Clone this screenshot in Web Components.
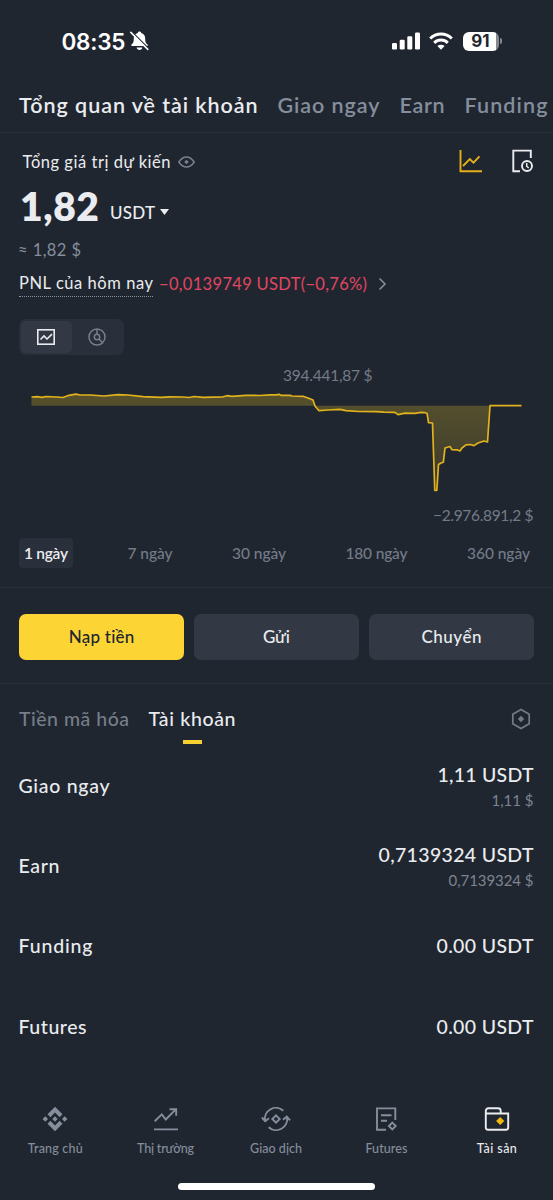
<!DOCTYPE html>
<html lang="vi">
<head>
<meta charset="utf-8">
<title>Tài sản</title>
<style>
    body { margin: 0; background: #202630; }
</style>
</head>
<body>
<wallet-screen></wallet-screen>

<script>
// Single line label, tracked out or in so that it fills the given width
class FitLabel extends HTMLElement {
    constructor() {
        super();
        this.attachShadow({ mode: 'open' });
        this.shadowRoot.innerHTML = `
            <style>
                :host { display: inline-block; white-space: nowrap; }
                span { display: inline-block; }
            </style>
            <span><slot></slot></span>
        `;
    }
    connectedCallback() {
        const width = parseFloat(this.getAttribute('width'));
        const gaps = this.textContent.length - 1;
        if (!width || gaps < 1) return;
        const span = this.shadowRoot.querySelector('span');
        const spacing = (width - span.getBoundingClientRect().width) / gaps;
        span.style.letterSpacing = `${spacing}px`;
        span.style.marginRight = `${-spacing}px`;
    }
}
customElements.define('fit-label', FitLabel);

class StatusBar extends HTMLElement {
    constructor() {
        super();
        this.attachShadow({ mode: 'open' });
        this.shadowRoot.innerHTML = `
            <style>
                :host {
                    display: flex; align-items: center; justify-content: space-between;
                    box-sizing: border-box; height: 82px; padding: 0 51.5px 0 61.5px;
                    color: #fff; font-family: Inter, "Liberation Sans", sans-serif;
                }
                .side { display: flex; align-items: center; }
                .time { font-size: 22.5px; font-weight: 600; }
                svg { display: block; }
                .bell { margin-left: 4px; }
                .wifi { margin: 0 9.5px 0 8px; }
                .battery {
                    width: 36px; height: 19px; border-radius: 6px;
                    background: linear-gradient(90deg, #fff 33px, #868a90 33px);
                    color: #202630; font-size: 17px; font-weight: 700; line-height: 19px; text-align: center;
                }
                .cap { width: 2px; height: 6px; margin-left: 1px; border-radius: 0 2px 2px 0; background: #868a90; }
            </style>
            <div class="side">
                <fit-label class="time" width="64">08:35</fit-label>
                <svg class="bell" width="19" height="20" viewBox="0 0 19 20">
                    <path fill="#fff" d="M9.5.5c.9 0 1.6.6 1.7 1.4 2.6.6 4 2.8 4 5.3 0 4 .6 4.8 2.3 6.3.6.6.3 1.5-.5 1.5H2c-.8 0-1.1-.9-.5-1.5C3.2 12 3.8 11.2 3.8 7.2c0-2.5 1.4-4.7 4-5.3C7.9 1.1 8.6.5 9.5.5zM6.6 16.6h5.8c-.3 1.500-1.500 2.400-2.900 2.400s-2.600-.9-2.900-2.400z"/>
                    <path d="M2 1 18.800 17.800" stroke="#202630" stroke-width="1.500"/>
                    <path d="M.8 1.400 17.800 18.400" stroke="#fff" stroke-width="1.500" stroke-linecap="round"/>
                </svg>
            </div>
            <div class="side">
                <svg width="29" height="18" viewBox="0 0 29 18" fill="#fff">
                    <rect x="0" y="11" width="5" height="6.5" rx="1.3"/>
                    <rect x="7.7" y="7.8" width="5" height="9.7" rx="1.3"/>
                    <rect x="15.3" y="4.2" width="5" height="13.3" rx="1.3"/>
                    <rect x="23" y=".5" width="5" height="17" rx="1.3"/>
                </svg>
                <svg class="wifi" width="24" height="18" viewBox="0 0 24 18" fill="none" stroke="#fff" stroke-width="3">
                    <path d="M1.2 6.5a15.5 15.5 0 0 1 21.6 0"/>
                    <path d="M5.2 10.8a9.8 9.8 0 0 1 13.6 0"/>
                    <path d="M8.4 14.1a5.2 5.2 0 0 1 7.2 0L12 17.7z" fill="#fff" stroke="none"/>
                </svg>
                <div class="battery">91</div>
                <div class="cap"></div>
            </div>
        `;
    }
}
customElements.define('status-bar', StatusBar);

class SectionTabs extends HTMLElement {
    constructor() {
        super();
        this.attachShadow({ mode: 'open' });
        this.shadowRoot.innerHTML = `
            <style>
                :host {
                    display: flex; gap: 20px; box-sizing: border-box; height: 51px; padding: 10px 0 0 19px;
                    overflow: hidden; border-bottom: 1px solid #2b313b;
                    color: #848e9c; font-size: 21.5px; font-weight: 600; line-height: 27px;
                }
                ::slotted([active]) { color: #eaecef; }
            </style>
            <slot></slot>
        `;
    }
}
customElements.define('section-tabs', SectionTabs);

class BalanceSummary extends HTMLElement {
    constructor() {
        super();
        this.attachShadow({ mode: 'open' });
        this.shadowRoot.innerHTML = `
            <style>
                :host { display: block; padding: 0 19px; color: #eaecef; font-size: 16.5px; }
                .row { display: flex; align-items: center; }
                svg { display: block; flex: none; fill: none; stroke: currentColor; }
                .title { height: 27px; padding: 15px 0 0 3.5px; }
                .eye { margin-left: 7px; color: #77808c; }
                .tools { display: flex; gap: 29px; margin: -2px 0 0 auto; padding-right: 1px; }
                .trend { color: #e3b01a; }
                .total { align-items: baseline; height: 52px; padding: 4.5px 0 0 1px; }
                .total b { font-size: 39px; line-height: 52px; font-weight: 800; }
                .unit { position: relative; top: -2px; margin-left: 11px; font-size: 17px; font-weight: 500; }
                .caret { align-self: center; margin: 13px 0 0 5px; }
                .fiat { height: 28px; padding-top: 4px; color: #848e9c; font-size: 16.5px; }
                .fiat fit-label { margin-left: -1px; }
                .pnl { height: 27px; margin-top: 7px; }
                .pnl .name { height: 25px; line-height: 23px; box-sizing: border-box; border-bottom: 1px dotted #8a929c; }
                .loss { margin-left: 6px; color: #e04761; }
                .arrow { margin-left: 11px; color: #848e9c; }
                .switch {
                    display: flex; box-sizing: border-box; width: 105px; height: 36px; margin-top: 21.5px;
                    padding: 2px; border-radius: 7px; background: #29303b;
                }
                .switch div { flex: 1; display: grid; place-items: center; border-radius: 5px; color: #777f8b; }
                .switch .on { background: #333944; color: #eaecef; }
            </style>
            <div class="row title">
                <fit-label width="148">Tổng giá trị dự kiến</fit-label>
                <svg class="eye" width="17" height="12" viewBox="0 0 17 12" stroke-width="1.5">
                    <path d="M.8 6C3 2.7 5.6.9 8.5.9S14 2.7 16.2 6c-2.2 3.3-4.8 5.1-7.700 5.100S3 9.300.8 6z"/>
                    <path d="M8.5 3.7 10.8 6 8.5 8.3 6.2 6z" fill="currentColor" stroke="none"/>
                </svg>
                <div class="tools">
                    <svg class="trend" width="23" height="24" viewBox="0 0 23 24" stroke-width="1.9">
                        <path d="M1.5 1v21.3H23M4 17 10.8 10l3.7 3.7L20.5 7.4"/>
                    </svg>
                    <svg width="22" height="24" viewBox="0 0 22 24" stroke-width="1.9">
                        <path d="M9 22.2H2.3V1.600H19.800V9"/>
                        <circle cx="16" cy="17" r="5"/>
                        <path d="M15.7 14v3.200l2 1.800" stroke-width="1.5"/>
                    </svg>
                </div>
            </div>
            <div class="row total">
                <b><fit-label width="79">1,82</fit-label></b>
                <fit-label class="unit" width="45">USDT</fit-label>
                <svg class="caret" width="9" height="6" viewBox="0 0 9 6"><path d="M0 0h9L4.5 6z" fill="currentColor" stroke="none"/></svg>
            </div>
            <div class="row fiat"><fit-label width="63">≈ 1,82 $</fit-label></div>
            <div class="row pnl">
                <fit-label class="name" width="134">PNL của hôm nay</fit-label>
                <fit-label class="loss" width="208">−0,0139749 USDT(−0,76%)</fit-label>
                <svg class="arrow" width="9" height="14" viewBox="0 0 9 14" stroke-width="1.6"><path d="M1.5 1.5 7 7 1.5 12.5"/></svg>
            </div>
            <div class="switch">
                <div class="on">
                    <svg width="18" height="16" viewBox="0 0 18 16" stroke-width="1.6">
                        <rect x=".8" y=".8" width="16.4" height="14.4"/>
                        <path d="M3.5 10.5 7 7l3 3 5-4.8"/>
                    </svg>
                </div>
                <div>
                    <svg width="18" height="18" viewBox="0 0 18 18" stroke-width="1.5">
                        <circle cx="9" cy="9" r="8"/>
                        <circle cx="9" cy="9" r="2.7"/>
                        <path d="M9 1v5.3M11 11l3.7 3.7"/>
                    </svg>
                </div>
            </div>
        `;
    }
}
customElements.define('balance-summary', BalanceSummary);

class PnlChart extends HTMLElement {
    constructor() {
        super();
        this.attachShadow({ mode: 'open' });
        const points = [
            [31.5, 37], [37, 36.7], [42, 37.3], [46, 36.5], [57, 37], [63, 37.5], [69, 35.3], [76, 34.2], [80, 35],
            [90, 35], [104, 36], [118, 34.7], [128, 35], [143, 36.7], [161, 37.3], [170, 36.8], [183, 37], [189, 37.5],
            [194, 36.5], [203, 37.3], [223, 36.8], [227, 35.7], [232, 36.3], [246, 35.4], [260, 35.5], [270, 34.8],
            [276, 34.8], [279, 34.4], [281, 35.3], [290, 35.4], [292, 36], [303, 36.3], [308, 38], [313, 40],
            [315, 46], [319, 50.7], [328, 50], [340, 49.3], [346, 50.7], [358, 51.5], [376, 51.7], [384, 52.2],
            [395, 52.4], [398, 54.6], [405, 53.2], [415, 53.4], [421, 52.3], [425, 52.7], [427, 53.2], [428.5, 62.7],
            [432.5, 63], [434.8, 130.5], [436.8, 130.5], [438.5, 104.5], [441, 103], [443.3, 102.3],
            [445, 88], [450, 86.5], [452, 89.7], [457, 89.8], [460, 91], [462, 88], [466, 84.8], [470, 84.5],
            [474, 85.6], [478, 83], [484, 81], [487.5, 82], [490, 45.7], [521.5, 45.7]
        ];
        const line = points.map(p => p.join(',')).join(' L');
        this.shadowRoot.innerHTML = `
            <style>
                :host { display: block; height: 178px; margin-top: 5px; }
                svg { display: block; }
                text { fill: #737b88; font-size: 15.5px; }
            </style>
            <svg width="553" height="178" viewBox="0 0 553 178">
                <defs>
                    <linearGradient id="fade" gradientUnits="userSpaceOnUse" x1="0" y1="34" x2="0" y2="131">
                        <stop offset="0" stop-color="#fcd020" stop-opacity=".25"/>
                        <stop offset=".4" stop-color="#fcd020" stop-opacity=".2"/>
                        <stop offset="1" stop-color="#fcd020" stop-opacity=".1"/>
                    </linearGradient>
                </defs>
                <path d="M31.5,45.7 L${line} Z" fill="url(#fade)"/>
                <path d="M${line}" fill="none" stroke="#e0b21c" stroke-width="1.7" stroke-linejoin="round"/>
                <text x="283" y="20.5" textLength="89.5">394.441,87 $</text>
                <text x="433" y="161" textLength="100.5">−2.976.891,2 $</text>
            </svg>
        `;
    }
}
customElements.define('pnl-chart', PnlChart);

class RangePicker extends HTMLElement {
    constructor() {
        super();
        this.attachShadow({ mode: 'open' });
        this.shadowRoot.innerHTML = `
            <style>
                :host {
                    display: flex; justify-content: space-between; box-sizing: border-box; height: 50px;
                    padding: 0 18px 0 19px; border-bottom: 1px solid #2b313b;
                    color: #737b88; font-size: 15.5px; font-weight: 500; line-height: 30px;
                }
                ::slotted(*) { height: 30px; padding: 0 5px; border-radius: 4px; }
                ::slotted([active]) { background: #29303b; color: #eaecef; font-weight: 600; }
            </style>
            <slot></slot>
        `;
    }
}
customElements.define('range-picker', RangePicker);

class ActionButton extends HTMLElement {
    constructor() {
        super();
        this.attachShadow({ mode: 'open' });
        this.shadowRoot.innerHTML = `
            <style>
                :host { display: block; flex: 1; }
                button {
                    display: block; width: 100%; height: 46px; padding: 0; border: 0; border-radius: 7px;
                    background: #333944; color: #eaecef; font: inherit; font-size: 17px; font-weight: 500;
                }
                :host([primary]) button { background: #fcd535; color: #202630; }
            </style>
            <button><slot></slot></button>
        `;
    }
}
customElements.define('action-button', ActionButton);

class AssetTabs extends HTMLElement {
    constructor() {
        super();
        this.attachShadow({ mode: 'open' });
        this.shadowRoot.innerHTML = `
            <style>
                :host {
                    display: flex; align-items: flex-start; height: 42px; padding: 20px 22px 0 19px;
                    color: #757e8a; font-size: 19.5px; font-weight: 500; line-height: 30px;
                }
                .tab { margin-right: 19.5px; }
                .on { color: #eaecef; }
                .on::after { content: ""; display: block; width: 19px; height: 4px; margin: 6px auto 0; background: #f5d033; }
                svg { margin: 4px 0 0 auto; fill: none; stroke: #737b87; stroke-width: 1.7; }
            </style>
            <div class="tab"><fit-label width="110">Tiền mã hóa</fit-label></div>
            <div class="tab on"><fit-label width="87">Tài khoản</fit-label></div>
            <svg width="20" height="22" viewBox="0 0 20 22">
                <path d="M10 1.6 18.2 6.3v9.4L10 20.4l-8.2-4.7V6.3z"/>
                <path d="M10 7.8 13.2 11 10 14.2 6.8 11z" fill="#737b87" stroke="none"/>
            </svg>
        `;
    }
}
customElements.define('asset-tabs', AssetTabs);

class AssetRow extends HTMLElement {
    constructor() {
        super();
        this.attachShadow({ mode: 'open' });
        this.shadowRoot.innerHTML = `
            <style>
                :host {
                    display: flex; align-items: center; justify-content: space-between;
                    height: 80.2px; padding: 0 19.5px 0 18.5px;
                    color: #eaecef; font-size: 19.5px; font-weight: 500; line-height: 26px;
                }
                .value { display: flex; flex-direction: column; align-items: flex-end; }
                ::slotted([slot=fiat]) {
                    margin-bottom: -2px; color: #7b8490; font-size: 15px; font-weight: 400; line-height: 24px;
                }
            </style>
            <slot></slot>
            <div class="value"><slot name="amount"></slot><slot name="fiat"></slot></div>
        `;
    }
}
customElements.define('asset-row', AssetRow);

class NavItem extends HTMLElement {
    constructor() {
        super();
        this.attachShadow({ mode: 'open' });
        this.shadowRoot.innerHTML = `
            <style>
                :host {
                    display: flex; flex: 1; flex-direction: column; align-items: center; gap: 9px;
                    color: #848e9c; font-size: 12.5px; font-weight: 500; line-height: 16px;
                }
                :host([active]) { color: #eaecef; }
                ::slotted(svg) { display: block; fill: none; stroke: currentColor; stroke-width: 1.9; }
            </style>
            <slot name="icon"></slot>
            <div><slot></slot></div>
        `;
    }
}
customElements.define('nav-item', NavItem);

class BottomNav extends HTMLElement {
    constructor() {
        super();
        this.attachShadow({ mode: 'open' });
        this.shadowRoot.innerHTML = `
            <style>
                :host { display: block; padding-top: 38px; }
                nav { display: flex; height: 77px; margin-right: 1px; }
                .home { width: 197px; height: 7px; margin: 0 auto; border-radius: 4px; background: #fff; }
            </style>
            <nav>
                <nav-item>
                    <svg slot="icon" width="26" height="26" viewBox="0 0 26 26">
                        <g fill="currentColor" stroke="none">
                            <path d="M13 .8 20.5 8.3 17.6 11.2 13 6.6 8.4 11.2 5.5 8.3z"/>
                            <path d="M13 25.2 5.5 17.7 8.4 14.8 13 19.4 17.6 14.8 20.5 17.7z"/>
                            <path d="M13 10.3 15.7 13 13 15.7 10.3 13zM3.3 10.3 6 13 3.3 15.7.6 13zM22.7 10.3 25.4 13 22.7 15.7 20 13z"/>
                        </g>
                    </svg>
                    <fit-label width="55">Trang chủ</fit-label>
                </nav-item>
                <nav-item>
                    <svg slot="icon" width="26" height="26" viewBox="0 0 26 26">
                        <path d="M1.7 15.2 8.8 8.3l4 5.2L22.5 3.6M16.5 3.2h6.7v6.6M1 23.4h24"/>
                    </svg>
                    <fit-label width="57">Thị trường</fit-label>
                </nav-item>
                <nav-item>
                    <svg slot="icon" width="30" height="26" viewBox="0 0 30 26">
                        <path d="M22.3 4.8A11 11 0 0 0 4 14.8M7.7 21.2A11 11 0 0 0 26 11.2M.9 11.5l3.3 3.7 3.8-3M22 13.8l3.8-3.2 3.3 3.7M15 9.3 18.7 13 15 16.7 11.3 13z"/>
                    </svg>
                    <fit-label width="52">Giao dịch</fit-label>
                </nav-item>
                <nav-item>
                    <svg slot="icon" width="24" height="26" viewBox="0 0 24 26">
                        <path d="M12 23.7H3V2.4H21.3V14M7 9.2h10.5M7 14.7h6M18.3 16.6 21.7 20l-3.4 3.4L14.9 20z"/>
                    </svg>
                    <fit-label width="42">Futures</fit-label>
                </nav-item>
                <nav-item active>
                    <svg slot="icon" width="26" height="26" viewBox="0 0 26 26">
                        <path d="M1.8 8.5V5C1.8 3 3 2.2 4.5 2.2H14c1.8 0 2.7.8 2.7 2.5V7.5H24.2V21.5c0 1.4-.7 2.2-2.2 2.2H4c-1.5 0-2.2-.8-2.2-2.2V7.5H17"/>
                        <path d="M16.2 10.9 20.3 15l-4.1 4.1L12.1 15z" fill="#f0b90b" stroke="none"/>
                    </svg>
                    <fit-label width="40">Tài sản</fit-label>
                </nav-item>
            </nav>
            <div class="home"></div>
        `;
    }
}
customElements.define('bottom-nav', BottomNav);

class WalletScreen extends HTMLElement {
    constructor() {
        super();
        this.attachShadow({ mode: 'open' });
        this.shadowRoot.innerHTML = `
            <style>
                :host {
                    display: block; width: 553px; height: 1200px; overflow: hidden;
                    background: #202630; color: #eaecef; font-family: Lato, "Open Sans", sans-serif;
                }
                .actions {
                    display: flex; gap: 10px; box-sizing: border-box; height: 96px;
                    padding: 25.5px 19px 0; border-bottom: 1px solid #2b313b;
                }
                .assets { height: 322px; }
            </style>
            <status-bar></status-bar>
            <section-tabs>
                <fit-label active width="238.5">Tổng quan về tài khoản</fit-label>
                <fit-label width="102">Giao ngay</fit-label>
                <fit-label width="45">Earn</fit-label>
                <fit-label width="83">Funding</fit-label>
            </section-tabs>
            <balance-summary></balance-summary>
            <pnl-chart></pnl-chart>
            <range-picker>
                <fit-label active width="44">1 ngày</fit-label>
                <fit-label width="45">7 ngày</fit-label>
                <fit-label width="54">30 ngày</fit-label>
                <fit-label width="62">180 ngày</fit-label>
                <fit-label width="63">360 ngày</fit-label>
            </range-picker>
            <div class="actions">
                <action-button primary><fit-label width="66">Nạp tiền</fit-label></action-button>
                <action-button><fit-label width="27">Gửi</fit-label></action-button>
                <action-button><fit-label width="60">Chuyển</fit-label></action-button>
            </div>
            <asset-tabs></asset-tabs>
            <div class="assets">
                <asset-row>
                    <fit-label width="91">Giao ngay</fit-label>
                    <fit-label slot="amount" width="96">1,11 USDT</fit-label>
                    <fit-label slot="fiat" width="42">1,11 $</fit-label>
                </asset-row>
                <asset-row>
                    <fit-label width="41">Earn</fit-label>
                    <fit-label slot="amount" width="155">0,7139324 USDT</fit-label>
                    <fit-label slot="fiat" width="85">0,7139324 $</fit-label>
                </asset-row>
                <asset-row>
                    <fit-label width="74">Funding</fit-label>
                    <fit-label slot="amount" width="97">0.00 USDT</fit-label>
                </asset-row>
                <asset-row>
                    <fit-label width="68">Futures</fit-label>
                    <fit-label slot="amount" width="97">0.00 USDT</fit-label>
                </asset-row>
            </div>
            <bottom-nav></bottom-nav>
        `;
    }
}
customElements.define('wallet-screen', WalletScreen);
</script>
</body>
</html>
